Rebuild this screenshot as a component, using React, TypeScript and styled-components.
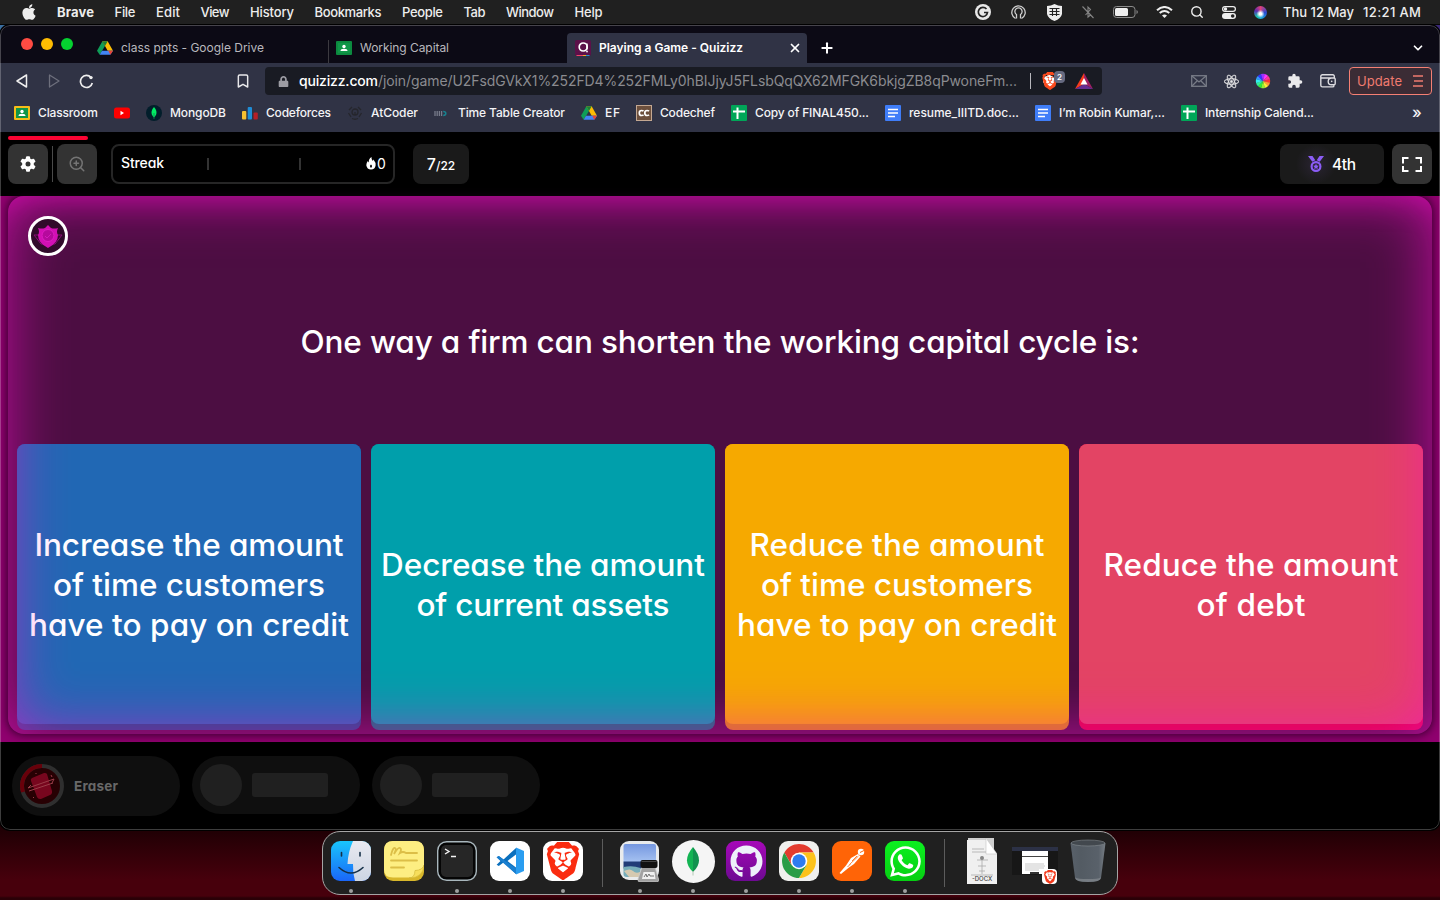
import React, { useLayoutEffect, useRef, useState } from "react";
import styled, { createGlobalStyle } from "styled-components";
import { FaApple, FaReact, FaWhatsapp, FaGithub, FaLock } from "react-icons/fa";
import { SiBrave } from "react-icons/si";
import { Search, ZoomIn, Bookmark, ChevronDown, Plus, X } from "lucide-react";

const UI = `Inter, "Liberation Sans", sans-serif`;

const Global = createGlobalStyle`
  * { box-sizing: border-box; }
  html, body { margin: 0; padding: 0; height: 900px; overflow: hidden; background: #43000b; }
  svg { display: block; flex: none; }
`;

/* Text that spreads its letters so that it fills a given width. */
const FitBox = styled.span<{ $w: number }>`
  display: inline-block;
  flex: none;
  width: ${(p) => p.$w}px;
  white-space: pre;
  text-align: left;
`;
function Fit({ w, children }: { w: number; children: string }) {
  const ref = useRef<HTMLSpanElement>(null);
  const [spacing, setSpacing] = useState(0);
  useLayoutEffect(() => {
    if (!ref.current) return;
    const natural = ref.current.getBoundingClientRect().width;
    setSpacing((w - natural) / Math.max(1, children.length - 1));
  }, [w, children]);
  return (
    <FitBox $w={w}>
      <span ref={ref} style={{ letterSpacing: spacing }}>{children}</span>
    </FitBox>
  );
}

const Desktop = styled.div`
  width: 1440px;
  height: 900px;
  display: flex;
  flex-direction: column;
  align-items: center;
  font-family: ${UI};
  background:
    linear-gradient(90deg, #3b6ea0 0 20px, transparent 20px 1420px, #3b2a78 1420px) 0 24px / 100% 12px no-repeat,
    linear-gradient(#1c0004 826px, #2c0007 845px, #47000c 880px, #47000c 896px, #2a0007 898px);
`;

/* ---------- menu bar ---------- */
const MenuBar = styled.header`
  width: 100%;
  height: 25px;
  flex: none;
  display: flex;
  align-items: center;
  background: #202020;
  border-bottom: 1px solid #050505;
  color: #ededed;
  font-size: 13px;
  font-weight: 500;
  padding-left: 20px;
`;
const Menus = styled.nav`
  display: flex;
  gap: 20.5px;
  margin-left: 19px;
  flex: 1;
`;
const MenuName = styled.span<{ $bold?: boolean }>`
  font-weight: ${(p) => (p.$bold ? 700 : 500)};
`;
const Slot = styled.span<{ $w: number }>`
  width: ${(p) => p.$w}px;
  display: flex;
  justify-content: center;
  align-items: center;
`;
const Clock = styled.span`
  display: flex;
  gap: 9px;
  margin: 0 19px 0 9px;
`;
const Siri = styled.i`
  width: 13px;
  height: 13px;
  border-radius: 50%;
  background: radial-gradient(circle at 50% 60%, #fff 0 12%, transparent 40%),
    conic-gradient(#e0407a, #2c4ad0 90deg, #1c9fe0 160deg, #1cc5b0 220deg, #5a2bb0 290deg, #e0407a);
`;

/* ---------- browser ---------- */
const Browser = styled.main`
  position: relative;
  width: 1440px;
  height: 805px;
  flex: none;
  display: flex;
  flex-direction: column;
  border-radius: 10px;
  overflow: hidden;
  background: #000;
  box-shadow: 0 0 0 1px #000;
  &::after {
    content: "";
    position: absolute;
    inset: 0;
    border: 1px solid rgba(255, 255, 255, 0.24);
    border-radius: 10px;
    pointer-events: none;
  }
`;
const TabStrip = styled.div`
  height: 38px;
  flex: none;
  display: flex;
  align-items: flex-end;
  background: #0c0a15;
`;
const Lights = styled.div`
  display: flex;
  gap: 8px;
  width: 89px;
  height: 38px;
  padding: 13px 0 0 21px;
`;
const Light = styled.i<{ $c: string }>`
  width: 12px;
  height: 12px;
  border-radius: 50%;
  background: ${(p) => p.$c};
`;
const Tab = styled.div<{ $active?: boolean; $line?: boolean }>`
  width: ${(p) => (p.$active ? 240 : 239)}px;
  height: 30px;
  display: flex;
  align-items: center;
  gap: 8px;
  padding: 0 5px 0 8px;
  font-size: 12px;
  font-weight: ${(p) => (p.$active ? 600 : 400)};
  color: ${(p) => (p.$active ? "#fff" : "#b9b8bd")};
  background: ${(p) => (p.$active ? "#303345" : p.$line ? "linear-gradient(#3c3a40, #3c3a40) 0 7px / 1px 23px no-repeat" : "none")};
  border-radius: 4px 4px 0 0;
  & > span {
    margin-top: -1px;
  }
`;
const TabClose = styled.b`
  margin-left: auto;
`;
const StripButton = styled.span<{ $push?: boolean }>`
  height: 30px;
  display: flex;
  align-items: center;
  margin: ${(p) => (p.$push ? "0 15px 0 auto" : "0 0 0 12px")};
  color: #fff;
`;
const Toolbar = styled.div`
  height: 36px;
  flex: none;
  display: flex;
  align-items: center;
  background: #303345;
  padding-left: 6px;
  color: #e8e8ea;
`;
const Address = styled.div`
  width: 837px;
  height: 28px;
  margin-left: 6px;
  border-radius: 4px;
  background: #191b23;
  display: flex;
  align-items: center;
  padding-left: 13px;
  font-size: 14px;
  color: #8b8b90;
  & > span {
    margin-top: -1px;
  }
`;
const Host = styled.span`
  color: #fff;
  font-weight: 500;
  margin-left: 10px;
`;
const AddressLine = styled.i`
  width: 1px;
  height: 16px;
  margin: 0 10px 0 13px;
  background: #b8b8bd;
`;
const ShieldWrap = styled.span`
  position: relative;
  color: #fb4a1d;
  margin-right: 17px;
  width: 17px;
  background: radial-gradient(circle at 8px 9px, #fff 5.5px, transparent 6px);
`;
const CountBadge = styled.b`
  position: absolute;
  left: 13px;
  top: -1px;
  width: 11px;
  height: 12px;
  border-radius: 4px;
  background: #666a80;
  color: #fff;
  font: 600 8px/12px ${UI};
  text-align: center;
`;
const Update = styled.button`
  width: 83px;
  height: 28px;
  margin-left: 4px;
  border: 1px solid #f58074;
  border-radius: 4px;
  background: #3b2c35;
  color: #f07b70;
  font: 400 13px ${UI};
  display: flex;
  align-items: center;
  gap: 11px;
  padding: 0 0 0 7px;
`;
const Bookmarks = styled.div`
  height: 33px;
  flex: none;
  display: flex;
  align-items: center;
  gap: 16px;
  background: #303345;
  padding: 0 0 5px 14px;
  color: #f4f4f6;
  font-size: 12px;
  font-weight: 500;
`;
const Mark = styled.span`
  display: flex;
  align-items: center;
  gap: 8px;
  height: 16px;
  & > span {
    margin-top: -2px;
  }
`;
const More = styled.span`
  margin: -3px 0 0 82px;
  font-size: 16px;
  line-height: 14px;
`;

/* ---------- game ---------- */
const GameBar = styled.div`
  position: relative;
  height: 64px;
  flex: none;
  display: flex;
  align-items: center;
  padding: 0 8px;
  background: #000;
  color: #fff;
  font-family: ${UI};
  font-feature-settings: "cv11";
`;
const Progress = styled.i`
  position: absolute;
  left: 8px;
  top: 4px;
  width: 80px;
  height: 4px;
  border-radius: 2px;
  background: #fb0433;
`;
const Square = styled.button`
  width: 40px;
  height: 40px;
  padding: 0;
  border: 0;
  border-radius: 8px;
  background: #333;
  color: #fff;
  display: flex;
  align-items: center;
  justify-content: center;
`;
const Rule = styled.i`
  width: 1px;
  height: 36px;
  margin: 0 4px;
  background: #4a4a4a;
`;
const Streak = styled.div`
  width: 284px;
  height: 40px;
  margin-left: 14px;
  border: 2px solid #262626;
  border-radius: 8px;
  display: flex;
  align-items: center;
  padding: 0 8px;
  font-size: 14px;
  font-weight: 500;
`;
const StreakName = styled.span`
  margin-top: -4px;
`;
const Tick = styled.i<{ $ml: number }>`
  width: 2px;
  height: 12px;
  margin-left: ${(p) => p.$ml}px;
  background: #333;
`;
const Flame = styled.span`
  display: flex;
  align-items: center;
  gap: 1px;
  margin: -2px 0 0 auto;
  font-weight: 400;
`;
const Counter = styled.div`
  width: 56px;
  height: 40px;
  margin-left: 18px;
  border-radius: 8px;
  background: #1a1a1a;
  display: flex;
  justify-content: center;
  align-items: baseline;
  font-size: 16px;
  font-weight: 500;
  line-height: 40px;
`;
const Small = styled.small`
  font-size: 12px;
`;
const Rank = styled.div`
  width: 104px;
  height: 40px;
  margin: 0 8px 0 auto;
  border-radius: 8px;
  background: radial-gradient(circle at 36px 20px, #2a2433, #1a1a1a 20px);
  display: flex;
  align-items: center;
  gap: 8px;
  padding-left: 28px;
  font-size: 15.5px;
  font-weight: 500;
`;
const Stage = styled.section`
  height: 546px;
  flex: none;
  padding: 0 8px 8px;
  background: #90006f;
`;
const Board = styled.div`
  position: relative;
  height: 538px;
  padding: 0 9px 4px;
  border-radius: 16px;
  background: #4c0e42;
  box-shadow: 0 0 10px 1px rgba(20, 0, 20, 0.75);
  display: flex;
  flex-direction: column;
  font-family: ${UI};
  font-feature-settings: "cv11";
  color: #fff;
  font-size: 31.5px;
  font-weight: 500;
  line-height: 40px;
`;
const Glow = styled.div`
  position: absolute;
  inset: 0;
  border-radius: 16px;
  box-shadow:
    inset 0 0 60px rgba(250, 14, 205, 0.66),
    inset 0 24px 30px -24px rgba(215, 8, 175, 0.55);
  pointer-events: none;
`;
const Question = styled.div`
  height: 248px;
  display: flex;
  align-items: center;
  justify-content: center;
  padding-top: 43px;
`;
const Power = styled.div`
  position: absolute;
  z-index: 1;
  left: 20px;
  top: 20px;
  width: 40px;
  height: 40px;
  border: 3px solid #fff;
  border-radius: 50%;
  background: #310b2b;
`;
const Answers = styled.div`
  display: grid;
  grid-template-columns: repeat(4, 1fr);
  gap: 10px;
`;
const Card = styled.div<{ $edge: string }>`
  height: 286px;
  border-radius: 8px;
  background: ${(p) => p.$edge};
`;
const Face = styled.div<{ $c: string }>`
  height: 280px;
  border-radius: 8px;
  background: ${(p) => p.$c};
  display: flex;
  flex-direction: column;
  align-items: center;
  justify-content: center;
  padding-top: 1px;
`;
const Powers = styled.footer`
  height: 87px;
  flex: none;
  display: flex;
  gap: 12px;
  padding: 14px 12px;
  background: #000;
`;
const Pill = styled.div<{ $h: number }>`
  width: 168px;
  height: ${(p) => p.$h}px;
  border-radius: 30px;
  background: #0f0f0f;
  display: flex;
  align-items: center;
  gap: 10px;
  padding-left: 8px;
  color: #686868;
  font: 700 13.5px ${UI};
  font-feature-settings: "cv11";
`;
const Disc = styled.i`
  width: 42px;
  height: 42px;
  border-radius: 50%;
  background: #202020;
`;
const Bar = styled.i`
  width: 76px;
  height: 24px;
  border-radius: 3px;
  background: #202020;
`;

/* ---------- dock ---------- */
const Dock = styled.div`
  width: 796px;
  height: 64px;
  margin-top: 1px;
  flex: none;
  border: 1px solid #a5a5a5;
  border-radius: 18px;
  background: #202020;
  display: flex;
  align-items: center;
  padding-left: 1.5px;
`;
const DockItem = styled.div<{ $dot?: boolean }>`
  width: 53px;
  height: 62px;
  display: flex;
  flex-direction: column;
  align-items: center;
  padding-top: 7px;
  &::after {
    content: "";
    width: 4px;
    height: 4px;
    margin-top: 6px;
    border-radius: 50%;
    background: ${(p) => (p.$dot ? "#a0a0a0" : "transparent")};
  }
`;
const IconBox = styled.span`
  height: 44px;
  display: flex;
  align-items: center;
`;
const Tile = styled.span<{ $bg: string; $round?: boolean }>`
  width: ${(p) => (p.$round ? 43 : 40)}px;
  height: ${(p) => (p.$round ? 43 : 40)}px;
  border-radius: ${(p) => (p.$round ? "50%" : "9px")};
  background: ${(p) => p.$bg};
  display: flex;
  align-items: center;
  justify-content: center;
`;
const DockLine = styled.i`
  width: 1px;
  height: 48px;
  margin: 0 11px 0 12px;
  background: #5c5c5c;
`;

/* ---------- small drawings ---------- */
const DriveIcon = () => (
  <svg width="16" height="16" viewBox="0 0 24 22">
    <path d="M8 1 0 15l4 6 8-13z" fill="#0f9d58" />
    <path d="M16 1l8 14h-8L12 8 8 1z" fill="#fbbc04" />
    <path d="M8 1h8l-4 7z" fill="#188038" />
    <path d="M7.500 15H24l-4 6H4z" fill="#4285f4" />
    <path d="M17 15h7l-4 6z" fill="#ea4335" />
  </svg>
);
const ClassIcon = ({ frame }: { frame: string }) => (
  <svg width="16" height="16" viewBox="0 0 16 16">
    <rect y="1" width="16" height="14" rx="1" fill={frame} />
    <rect x="2" y="3" width="12" height="10" fill="#109648" />
    <circle cx="8" cy="6.500" r="1.700" fill="#fff" />
    <path d="M4.500 11q0-2.300 3.500-2.300t3.500 2.300z" fill="#fff" />
  </svg>
);
const QuizIcon = () => (
  <svg width="16" height="16" viewBox="0 0 16 16">
    <rect width="16" height="16" rx="2" fill="#5c1149" />
    <path d="M1 15h7v1H2z" fill="#f5406a" />
    <path d="M8 15h3v1H8z" fill="#f0b020" />
    <path d="M11 15h4l-1 1h-3z" fill="#2a90d0" />
    <circle cx="8.200" cy="7" r="4" fill="none" stroke="#fff" strokeWidth="1.700" />
    <path d="M12 3.500V9.500" stroke="#fff" strokeWidth="1.400" />
    <circle cx="12" cy="11.500" r="0.900" fill="#fff" />
  </svg>
);
const YouTubeIcon = () => (
  <svg width="16" height="16" viewBox="0 0 16 16">
    <rect y="2.500" width="16" height="11" rx="2.500" fill="#fd0000" />
    <path d="M6.500 5.800v4.400L10 8z" fill="#fff" />
  </svg>
);
const MongoMini = () => (
  <svg width="16" height="16" viewBox="0 0 16 16">
    <circle cx="8" cy="8" r="8" fill="#021e2b" />
    <path d="M8 2c3.600 4 3 8-0 10.500C5 10 4.400 6 8 2z" fill="#00ed64" />
    <path d="M8 8v6" stroke="#0a8a50" strokeWidth="0.800" />
  </svg>
);
const ForcesIcon = () => (
  <svg width="16" height="16" viewBox="0 0 16 16">
    <rect x="0" y="6" width="4.300" height="8.500" rx="1" fill="#f8c030" />
    <rect x="5.700" y="2" width="4.300" height="12.500" rx="1" fill="#1f8dd6" />
    <rect x="11.500" y="7.500" width="4.300" height="7" rx="1" fill="#b51f26" />
  </svg>
);
const AtIcon = () => (
  <svg width="16" height="16" viewBox="0 0 16 16" fill="none" stroke="#25262c" strokeWidth="1.300">
    <circle cx="8" cy="7" r="3" />
    <path d="M2 5l3-3M14 5l-3-3M1.500 8 4 12M14.500 8 12 12M5 13.500q3 1.500 6 0M8 7v3" />
  </svg>
);
const TableIcon = () => (
  <svg width="16" height="16" viewBox="0 0 16 16" fill="none">
    <path d="M1 6v5M3.200 6v5M5.400 6v5M7.600 6v5" stroke="#777b8a" strokeWidth="1.300" />
    <path d="M9.200 6.600q2.600 0 2.600 1.900t-2.600 1.900" stroke="#17818e" strokeWidth="1.500" />
  </svg>
);
const ChefIcon = () => (
  <svg width="16" height="16" viewBox="0 0 16 16">
    <rect x=".5" y=".5" width="15" height="15" fill="#6d503d" stroke="#c4a892" />
    <g fill="none" stroke="#fff" strokeWidth="1.700">
      <path d="M7.500 6.200Q6.800 5.500 5.600 5.500 3.300 5.500 3.300 8t2.300 2.500q1.200 0 1.900-.8" />
      <path d="M13 6.200q-.7-.7-1.900-.7Q8.800 5.500 8.800 8t2.300 2.500q1.200 0 1.900-.8" />
    </g>
  </svg>
);
const SheetIcon = () => (
  <svg width="16" height="16" viewBox="0 0 16 16">
    <rect width="16" height="16" rx="1" fill="#00a658" />
    <path d="M2 6.500h12M6.500 2.500V14" stroke="#fff" strokeWidth="2" />
  </svg>
);
const DocIcon = () => (
  <svg width="16" height="16" viewBox="0 0 16 16">
    <rect width="16" height="16" rx="1" fill="#3f7df8" />
    <path d="M3 4.500h10M3 8h10M3 11.500h7" stroke="#fff" strokeWidth="1.600" />
  </svg>
);
const StarMedal = () => (
  <svg width="16" height="16" viewBox="0 0 16 16">
    <path d="M0 0h4.500l2.800 4.300-3 1.500zM16 0h-4.500L8.700 4.300l3 1.500z" fill="#8b5cf6" />
    <circle cx="8" cy="10.500" r="4.400" fill="none" stroke="#8b5cf6" strokeWidth="2.200" />
    <path d="m8 7.800.9 1.800 1.900.2-1.400 1.400.4 1.900L8 12.200l-1.800.9.4-1.900-1.400-1.400 1.900-.2z" fill="#8b5cf6" />
  </svg>
);
const ColorWheel = () => {
  const cols = ["#f33", "#f93", "#fe3", "#9e3", "#3e3", "#3e9", "#3ee", "#39f", "#33f", "#93f", "#f3f", "#f39"];
  return (
    <svg width="16" height="16" viewBox="-8 -8 16 16">
      {cols.map((c, i) => (
        <path key={c} d="M0 0-2-6.900A7.200 7.200 0 0 1 2-6.900z" fill={c} transform={`rotate(${90 + i * 30})`} />
      ))}
    </svg>
  );
};

const FinderArt = () => (
  <svg width="40" height="40" viewBox="0 0 40 40">
    <defs>
      <linearGradient id="fb" x2="0" y2="1"><stop stopColor="#19c5fb" /><stop offset="1" stopColor="#1a66f8" /></linearGradient>
      <linearGradient id="fw" x2="0" y2="1"><stop stopColor="#e8e9f0" /><stop offset="1" stopColor="#cdd5e3" /></linearGradient>
      <clipPath id="fc"><rect width="40" height="40" rx="9" /></clipPath>
    </defs>
    <g clipPath="url(#fc)">
      <rect width="40" height="40" fill="url(#fb)" />
      <path d="M22 0Q17 11 16.500 23H22q-.3 9 2 17h16V0z" fill="url(#fw)" />
    </g>
    <path d="M10.500 11.500v3.500M29 11.500v3.500M8 26.500q12 11 24 0" fill="none" stroke="#153048" strokeWidth="1.600" strokeLinecap="round" />
  </svg>
);
const NotesArt = () => (
  <svg width="40" height="40" viewBox="0 0 40 40">
    <rect width="40" height="40" rx="9" fill="#d8b72b" />
    <path d="M9 0h22q9 0 9 9v15q-1 5-9 5.500 0 8-6 7H9q-9 0-9-8V9Q0 0 9 0z" fill="#fdee82" />
    <path d="M40 24q-1 5-9 5.500 0 7-6 7.500 14 0 15-13z" fill="#f7df5c" stroke="#d2b83a" strokeWidth=".6" />
    <path d="M7 14q2-8 4-7t-1 6q4-7 6-6t0 5q3-2 6 0h11M7 19.500h26M7 26.500h13" fill="none" stroke="#dcbe47" strokeWidth="1.800" strokeLinecap="round" />
  </svg>
);
const TerminalArt = () => (
  <svg width="40" height="40" viewBox="0 0 40 40">
    <rect x=".7" y=".7" width="38.600" height="38.600" rx="9" fill="#050505" stroke="#a9b7bd" strokeWidth="1.400" />
    <rect x="4" y="4" width="32" height="32" rx="5" fill="#262626" />
    <path d="m8 8 4 2.500L8 13M14 15.500h5" fill="none" stroke="#f4f4f4" strokeWidth="1.400" />
  </svg>
);
const CodeArt = () => (
  <Tile $bg="#fff">
    <svg width="28" height="28" viewBox="0 0 28 28">
      <path d="M20 1 7.500 12.500 2.800 9 .6 10.200 4.500 14 .6 17.800 2.800 19 7.500 15.500 20 27z" fill="#0a6fbd" />
      <path d="M.6 10.200 2.800 9 20 21.500V27L.6 10.200z" fill="#1a7fd0" />
      <path d="M20 7.500 11.500 14 20 20.500z" fill="#fff" />
      <path d="M20 .5l8 3.500v20L20 27.500z" fill="#2a9df0" />
    </svg>
  </Tile>
);
const LionArt = () => (
  <Tile $bg="#fff">
    <SiBrave size={38} color="#fa2c10" />
  </Tile>
);
const PreviewArt = () => (
  <svg width="40" height="42" viewBox="0 0 40 42">
    <defs><linearGradient id="sky" x2="0" y2="1"><stop stopColor="#7597e0" /><stop offset="1" stopColor="#a8c4f2" /></linearGradient></defs>
    <rect y="1" width="39" height="39" rx="9" fill="#e9ebec" />
    <rect x="3.500" y="4" width="32.500" height="19" rx="2" fill="url(#sky)" />
    <path d="M3.500 21.500H36v7H3.500z" fill="#213c77" />
    <path d="M3.500 27q9-2 17 1v9h-14q-3 0-3-3z" fill="#78aeba" />
    <path d="M4 31q6-3 9 0t7 1v5H9z" fill="#d5c9b0" />
    <path d="M22 27h13l3.500 12q.8 3-2 3H20q-2.500 0-2-3z" fill="#a2a2a2" stroke="#d0d0d0" strokeWidth=".7" />
    <path d="M23.500 32h11l1 7H22z" fill="#efefef" />
    <path d="m24 37 2-3 1 3 2-3 1 2h4" fill="none" stroke="#555" strokeWidth=".8" />
    <rect x="20.500" y="20" width="17" height="8" rx="2" fill="#111" />
    <path d="M21.500 21.500h15" stroke="#444" />
  </svg>
);
const LeafArt = () => (
  <Tile $bg="#f5f5f5" $round>
    <svg width="14" height="29" viewBox="0 0 14 29">
      <path d="M7 0q12 14 0 25z" fill="#12924f" />
      <path d="M7 0q-12 14 0 25z" fill="#13b453" />
      <path d="M7 24v4.500" stroke="#b4c8b4" />
    </svg>
  </Tile>
);
const ChromeArt = () => (
  <Tile $bg="#f0f0ee">
    <svg width="36" height="36" viewBox="-18 -18 36 36">
      <circle r="17" fill="#fff" />
      <path d="M-14.700-8.500A17 17 0 0 1 14.700-8.500H0L-7.400 4.200z" fill="#e33b2e" />
      <path d="M14.700-8.500A17 17 0 0 1 0 17L7.400 4.200 0-8.500z" fill="#fcc21b" />
      <path d="M0 17A17 17 0 0 1-14.700-8.500L-7.400 4.200 7.400 4.200z" fill="#2a9d47" />
      <circle r="8.300" fill="#fff" />
      <circle r="6.700" fill="#2d7bf0" />
    </svg>
  </Tile>
);
const PostmanArt = () => (
  <Tile $bg="#ff6407">
    <svg width="28" height="28" viewBox="0 0 28 28">
      <circle cx="23" cy="5" r="3.200" fill="#fff" />
      <path d="m22 5.500 4-2" stroke="#ff6407" />
      <path d="M13 11 20 7l2.500 2.500L16 17l-5 3.500L3 27l-1.500-1L8 18.500z" fill="#fff" />
      <path d="m11.500 17.500 9-8.500M9.500 20l3-3M14 14l5-5" stroke="#ff6407" strokeWidth=".8" />
    </svg>
  </Tile>
);
const Mini = styled.text`
  font: 500 6px ${UI};
`;
const DocxArt = () => (
  <svg width="30" height="46" viewBox="0 0 30 46">
    <path d="M1 0h26v36H1z" fill="#cfcfcf" />
    <path d="M0 2h19l11 14v30H0z" fill="#f0f0f0" />
    <path d="M19 0v16h11z" fill="#fff" stroke="#c5c5c5" strokeWidth=".6" />
    <path d="M5 11h12M5 14h14M10 22h11M11 28h8M12 33h6M4 37h22M15 18v18" stroke="#aaa" strokeWidth=".8" />
    <circle cx="15" cy="20" r="2" fill="#888" />
    <Mini x="5" y="43" fill="#444">-DOCX</Mini>
  </svg>
);
const WindowWrap = styled.span`
  position: relative;
  width: 46px;
  height: 28px;
`;
const WindowBadge = styled.span`
  position: absolute;
  right: 1px;
  bottom: -9px;
  width: 15px;
  height: 15px;
  border-radius: 4px;
  background: #fff;
  color: #f23a1c;
  display: flex;
  align-items: center;
  justify-content: center;
`;
const WindowArt = () => (
  <WindowWrap>
    <svg width="46" height="28" viewBox="0 0 46 28">
      <rect width="46" height="28" fill="#171717" />
      <rect width="46" height="4" fill="#2c3146" />
      <rect x="10" y="4" width="26" height="23" fill="#fff" />
      <path d="M10 9.500h26" stroke="#444" />
      <path d="M13 17h19M13 19h20M13 21h19M13 23h14" stroke="#bbb" strokeWidth=".8" />
      <path d="M18 26h9" stroke="#333" strokeWidth="2" />
    </svg>
    <WindowBadge><SiBrave size={14} /></WindowBadge>
  </WindowWrap>
);
const TrashArt = () => (
  <svg width="36" height="44" viewBox="0 0 36 44">
    <defs><linearGradient id="tr"><stop stopColor="#59616a" /><stop offset=".3" stopColor="#535b63" /><stop offset=".8" stopColor="#59616a" /><stop offset="1" stopColor="#767d84" /></linearGradient></defs>
    <path d="M.5 4 5 39q1 4 13 4t13-4L35.500 4z" fill="url(#tr)" />
    <path d="M5 38.500q3 1.500 13 1.500t13-1.500q0 4.500-13 4.500T5 38.500z" fill="#8d9398" opacity=".6" />
    <ellipse cx="18" cy="4" rx="17" ry="3" fill="#42484e" stroke="#858b90" strokeWidth=".6" />
  </svg>
);

const menus: [string, number][] = [
  ["Brave", 37], ["File", 21], ["Edit", 24], ["View", 29], ["History", 44], ["Bookmarks", 67],
  ["People", 41], ["Tab", 22], ["Window", 48], ["Help", 28],
];
const marks: [React.ReactNode, string, number][] = [
  [<ClassIcon frame="#f7bd18" />, "Classroom", 60],
  [<YouTubeIcon />, "", 0],
  [<MongoMini />, "MongoDB", 56],
  [<ForcesIcon />, "Codeforces", 65],
  [<AtIcon />, "AtCoder", 47],
  [<TableIcon />, "Time Table Creator", 107],
  [<DriveIcon />, "EF", 15],
  [<ChefIcon />, "Codechef", 55],
  [<SheetIcon />, "Copy of FINAL450...", 114],
  [<DocIcon />, "resume_IIITD.doc...", 110],
  [<DocIcon />, "I’m Robin Kumar,...", 106],
  [<SheetIcon />, "Internship Calend...", 109],
];
const answers: { c: string; edge: string; lines: [string, number][] }[] = [
  { c: "#2168b4", edge: "#1a4c86", lines: [["Increase the amount", 309], ["of time customers", 272], ["have to pay on credit", 320]] },
  { c: "#009fab", edge: "#0c6f7a", lines: [["Decrease the amount", 324], ["of current assets", 253]] },
  { c: "#f6a900", edge: "#d88a0a", lines: [["Reduce the amount", 295], ["of time customers", 272], ["have to pay on credit", 320]] },
  { c: "#e34464", edge: "#dc0440", lines: [["Reduce the amount", 295], ["of debt", 109]] },
];

export default function App() {
  return (
    <Desktop>
      <Global />
      <MenuBar>
        <FaApple size={18} />
        <Menus>
          {menus.map(([name, w], i) => (
            <MenuName key={name} $bold={i === 0}><Fit w={w}>{name}</Fit></MenuName>
          ))}
        </Menus>
        <Slot $w={34}>
          <svg width="16" height="16" viewBox="0 0 16 16">
            <circle cx="8" cy="8" r="8" fill="#e8e8e8" />
            <path d="M11.500 5A4.600 4.600 0 1 0 12.500 8.500H9" fill="none" stroke="#222" strokeWidth="1.700" />
          </svg>
        </Slot>
        <Slot $w={36}>
          <svg width="15" height="15" viewBox="0 0 15 15" fill="none" stroke="#cfcfcf" strokeWidth="1.300">
            <path d="M4.500 13.500a6.700 6.700 0 1 1 6 0M5.500 11V9.500a3.600 3.600 0 1 1 4 0V11M5.500 10.500v3M9.500 10.500v3" />
          </svg>
        </Slot>
        <Slot $w={36}>
          <svg width="15" height="17" viewBox="0 0 15 17">
            <path d="M0 2q4 0 7.500-2Q11 2 15 2v8q-1 4.500-7.500 7Q1 14.500 0 10z" fill="#ededed" />
            <path d="M2.500 4.500h10M2.500 7.500h10M2.500 10.500h10M5.500 4v8M9.500 4v8" stroke="#222" strokeWidth="1.100" />
          </svg>
        </Slot>
        <Slot $w={32}>
          <svg width="12" height="14" viewBox="0 0 12 14" fill="none" stroke="#858585" strokeWidth="1.100">
            <path d="m3.500 10 5-5.500L6 2v10l2.500-2M.5 1.500l11 11.500" />
          </svg>
        </Slot>
        <Slot $w={42}>
          <svg width="25" height="12" viewBox="0 0 25 12">
            <rect x=".5" y=".5" width="21.500" height="11" rx="3" fill="none" stroke="#8a8a8a" />
            <rect x="2" y="2" width="13" height="8" rx="1.500" fill="#eee" />
            <path d="M23.500 4v4q1.300-.6 1.300-2T23.500 4z" fill="#8a8a8a" />
          </svg>
        </Slot>
        <Slot $w={36}>
          <svg width="17" height="12" viewBox="0 0 17 12" fill="none" stroke="#eee" strokeWidth="2">
            <path d="M1 4.300q7.500-6.600 15 0M3.700 7q4.800-4 9.600 0" />
            <path d="M6 9.500q2.500-2 5 0L8.500 12z" fill="#eee" stroke="none" />
          </svg>
        </Slot>
        <Slot $w={30}><Search size={14} strokeWidth={2.4} /></Slot>
        <Slot $w={34}>
          <svg width="14" height="13" viewBox="0 0 14 13">
            <rect x=".6" y=".6" width="12.800" height="4.800" rx="2.400" fill="none" stroke="#eee" strokeWidth="1.200" />
            <circle cx="3.500" cy="3" r="1.700" fill="#eee" />
            <rect y="7" width="14" height="6" rx="3" fill="#eee" />
            <circle cx="10.700" cy="10" r="1.800" fill="#222" />
          </svg>
        </Slot>
        <Slot $w={28}><Siri /></Slot>
        <Clock><Fit w={71}>Thu 12 May</Fit><Fit w={58}>12:21 AM</Fit></Clock>
      </MenuBar>

      <Browser>
        <TabStrip>
          <Lights><Light $c="#fe4b43" /><Light $c="#febc02" /><Light $c="#05d230" /></Lights>
          <Tab><DriveIcon /><Fit w={143}>class ppts - Google Drive</Fit></Tab>
          <Tab $line><ClassIcon frame="#0c8a3f" /><Fit w={89}>Working Capital</Fit></Tab>
          <Tab $active>
            <QuizIcon />
            <Fit w={144}>Playing a Game - Quizizz</Fit>
            <TabClose><X size={14} strokeWidth={3} /></TabClose>
          </Tab>
          <StripButton><Plus size={16} strokeWidth={3} /></StripButton>
          <StripButton $push><ChevronDown size={14} strokeWidth={3} /></StripButton>
        </TabStrip>
        <Toolbar>
          <Slot $w={32}>
            <svg width="12" height="14" viewBox="0 0 12 14" fill="none" stroke="#eee" strokeWidth="1.500" strokeLinejoin="round"><path d="M10.500 1v12L1 7z" /></svg>
          </Slot>
          <Slot $w={32}>
            <svg width="12" height="14" viewBox="0 0 12 14" fill="none" stroke="#6d6f7c" strokeWidth="1.300" strokeLinejoin="round"><path d="M1.500 1v12L11 7z" /></svg>
          </Slot>
          <Slot $w={32}>
            <svg width="15" height="15" viewBox="0 0 15 15" fill="none" stroke="#eee" strokeWidth="1.700">
              <path d="M12 3.500A6 6 0 1 0 13.300 9" /><circle cx="12" cy="3.600" r="1.700" fill="#eee" stroke="none" />
            </svg>
          </Slot>
          <Slot $w={125} />
          <Slot $w={32}><Bookmark size={16} strokeWidth={2.2} /></Slot>
          <Address>
            <FaLock size={11} color="#9c9ca3" />
            <Host><Fit w={79}>quizizz.com</Fit></Host>
            <Fit w={639}>/join/game/U2FsdGVkX1%252FD4%252FMLy0hBIJjyJ5FLsbQqQX62MFGK6bkjgZB8qPwoneFm...</Fit>
            <AddressLine />
            <ShieldWrap><SiBrave size={18} /><CountBadge>2</CountBadge></ShieldWrap>
            <svg width="18" height="16" viewBox="0 0 18 16">
              <path d="M9 0 0 16l9-5z" fill="#f73b1c" /><path d="M9 0l9 16-9-5z" fill="#9e1f63" />
              <path d="M0 16h18l-9-5z" fill="#662d91" /><path d="m9 5-3.500 6.500h7z" fill="#fff" />
            </svg>
          </Address>
          <Slot $w={81} />
          <Slot $w={32}>
            <svg width="16" height="12" viewBox="0 0 16 12" fill="none" stroke="#777b86" strokeWidth="1.300">
              <rect x=".7" y=".7" width="14.600" height="10.600" /><path d="m1 1 7 6 7-6M1 11l5-5M15 11l-5-5" />
            </svg>
          </Slot>
          <Slot $w={32}><FaReact size={15} stroke="#e8e8ea" strokeWidth={14} /></Slot>
          <Slot $w={32}><ColorWheel /></Slot>
          <Slot $w={32}>
            <svg width="16" height="16" viewBox="0 0 24 24">
              <path d="M20.500 11H19V7a2 2 0 0 0-2-2h-4V3.500a2.500 2.500 0 0 0-5 0V5H4a2 2 0 0 0-2 2v3.800h1.500a2.700 2.700 0 0 1 0 5.400H2V20a2 2 0 0 0 2 2h3.800v-1.500a2.700 2.700 0 0 1 5.400 0V22H17a2 2 0 0 0 2-2v-4h1.500a2.500 2.500 0 0 0 0-5z" fill="#eaeaec" />
            </svg>
          </Slot>
          <Slot $w={34}>
            <svg width="16" height="14" viewBox="0 0 16 14" fill="none" stroke="#dcdce0" strokeWidth="1.400">
              <path d="M14.300 4V2.200Q14.300.8 12.800.8H2.500Q.8.8.8 2.300v8.900q0 1.700 1.700 1.700h10q1.500 0 1.500-1.500V11M1 4h13q1.200 0 1.200 1.200v4.300q0 1.200-1.200 1.200h-2.500a3.300 3.300 0 0 1 0-6.600" />
              <circle cx="11.700" cy="7.400" r=".8" fill="#dcdce0" stroke="none" />
            </svg>
          </Slot>
          <Update>
            <Fit w={45}>Update</Fit>
            <svg width="10" height="12" viewBox="0 0 10 12"><path d="M0 1h10M1 6h9M0 11h10" stroke="#f07b70" strokeWidth="1.500" /></svg>
          </Update>
        </Toolbar>
        <Bookmarks>
          {marks.map(([icon, name, w], i) => (
            <Mark key={i}>{icon}{name && <Fit w={w}>{name}</Fit>}</Mark>
          ))}
          <More>»</More>
        </Bookmarks>

        <GameBar>
          <Progress />
          <Square>
            <svg width="16" height="16" viewBox="-8 -8 16 16">
              {[0, 60, 120].map((a) => <rect key={a} x="-2" y="-7.800" width="4" height="15.600" rx="1" fill="#fff" transform={`rotate(${a})`} />)}
              <circle r="4.300" fill="none" stroke="#fff" strokeWidth="3.200" /><circle r="2.500" fill="#333" />
            </svg>
          </Square>
          <Rule />
          <Square><ZoomIn size={18} color="#747474" strokeWidth={2} /></Square>
          <Streak>
            <StreakName><Fit w={43}>Streak</Fit></StreakName>
            <Tick $ml={43} /><Tick $ml={90} />
            <Flame>
              <svg width="10" height="13" viewBox="0 0 10 13">
                <path d="M5.500 0Q5 2 7 4.300q0-1 .5-1.800Q10 5.500 9.600 8.500 9 12.500 5 12.500T.3 8.300Q.3 6 1.800 4q.3 1 1 1.400Q2.500 2 5.500 0z" fill="#fff" />
                <path d="M5 7.500q2 1.600 0 3.500Q3 9.100 5 7.500z" fill="#000" />
              </svg>
              <Fit w={8}>0</Fit>
            </Flame>
          </Streak>
          <Counter>7<Small>/22</Small></Counter>
          <Rank><StarMedal /><Fit w={24}>4th</Fit></Rank>
          <Square>
            <svg width="20" height="15" viewBox="0 0 20 15" fill="none" stroke="#fff" strokeWidth="2"><path d="M6.500 1H1v5.500M1 9v5h5.500M13.500 1H19v5.500M19 9v5h-5.500" /></svg>
          </Square>
        </GameBar>

        <Stage>
          <Board>
            <Power>
              <svg width="34" height="34" viewBox="0 0 34 34">
                <path d="M3 16h28l-7 9H10z" fill="none" stroke="#8b0f77" />
                <path d="m17 6 3 3q3 1 7 0-2 4 0 7 0 8-10 13Q7 24 7 16q2-3 0-7 4 1 7 0z" fill="#d210b4" />
                <circle cx="17" cy="16.500" r="6" fill="#b50a9c" stroke="#e01cc4" />
                <path d="m14 17 2 2 4-4" fill="none" stroke="#d41abc" />
              </svg>
            </Power>
            <Question><Fit w={839}>One way a firm can shorten the working capital cycle is:</Fit></Question>
            <Answers>
              {answers.map((a) => (
                <Card key={a.c} $edge={a.edge}>
                  <Face $c={a.c}>{a.lines.map(([t, w]) => <Fit key={t} w={w}>{t}</Fit>)}</Face>
                </Card>
              ))}
            </Answers>
            <Glow />
          </Board>
        </Stage>

        <Powers>
          <Pill $h={60}>
            <svg width="44" height="44" viewBox="0 0 44 44">
              <circle cx="22" cy="22" r="20" fill="#270003" stroke="#2f2f2f" strokeWidth="4" />
              <path d="M22 2A20 20 0 0 0 3 28" fill="none" stroke="#68000a" strokeWidth="4" />
              <path d="m12 14 12-5q2-.5 3 1l5 17q.5 3-2 4l-9 4q-3 .5-4-2l-6-16q-.8-2 1-3z" fill="#78061e" />
              <path d="m8 24 26-9M9 27l24-8M8 24l3-3m23-6-2 4M16 9v1M31 11l1 2M13 33l1 1" stroke="#9a3c48" />
            </svg>
            <Fit w={44}>Eraser</Fit>
          </Pill>
          <Pill $h={58}><Disc /><Bar /></Pill>
          <Pill $h={58}><Disc /><Bar /></Pill>
        </Powers>
      </Browser>

      <Dock>
        <DockItem $dot><IconBox><FinderArt /></IconBox></DockItem>
        <DockItem><IconBox><NotesArt /></IconBox></DockItem>
        <DockItem $dot><IconBox><TerminalArt /></IconBox></DockItem>
        <DockItem $dot><IconBox><CodeArt /></IconBox></DockItem>
        <DockItem $dot><IconBox><LionArt /></IconBox></DockItem>
        <DockLine />
        <DockItem $dot><IconBox><PreviewArt /></IconBox></DockItem>
        <DockItem $dot><IconBox><LeafArt /></IconBox></DockItem>
        <DockItem $dot><IconBox><Tile $bg="linear-gradient(#a608b8, #6d0a92)"><FaGithub size={33} color="#eef0fa" /></Tile></IconBox></DockItem>
        <DockItem $dot><IconBox><ChromeArt /></IconBox></DockItem>
        <DockItem $dot><IconBox><PostmanArt /></IconBox></DockItem>
        <DockItem $dot><IconBox><Tile $bg="linear-gradient(#0cf020, #06cf12)"><FaWhatsapp size={35} color="#fff" /></Tile></IconBox></DockItem>
        <DockLine />
        <DockItem><IconBox><DocxArt /></IconBox></DockItem>
        <DockItem><IconBox><WindowArt /></IconBox></DockItem>
        <DockItem><IconBox><TrashArt /></IconBox></DockItem>
      </Dock>
    </Desktop>
  );
}
